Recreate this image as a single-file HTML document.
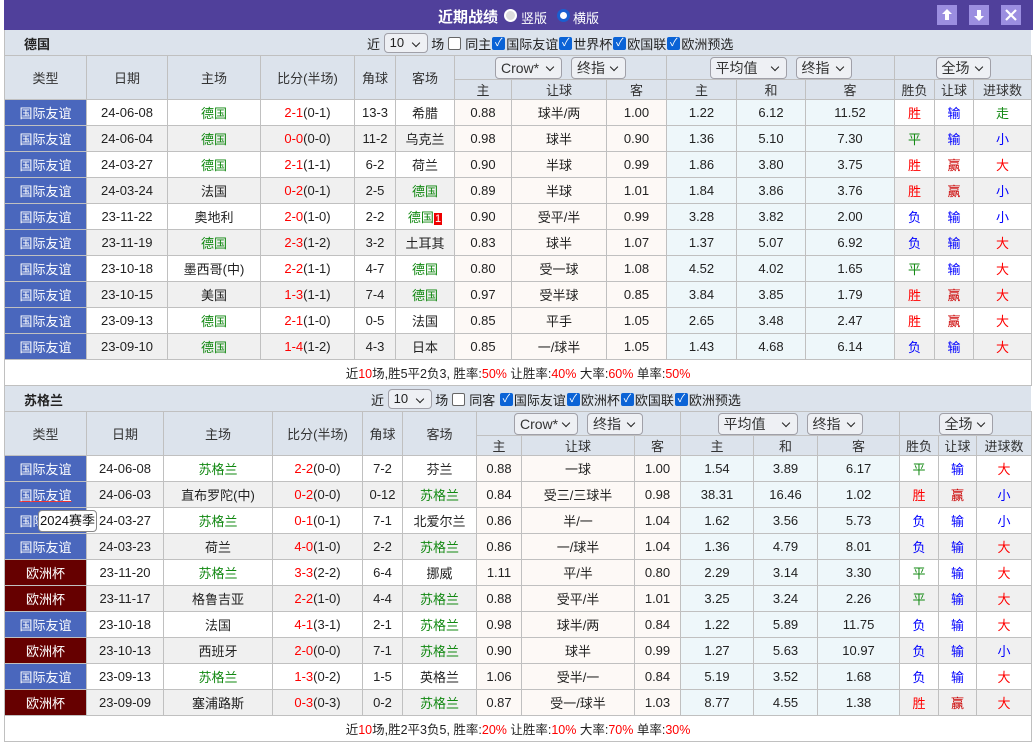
<!DOCTYPE html>
<html><head><meta charset="utf-8"><style>
*{box-sizing:border-box;margin:0;padding:0}
body{width:1033px;height:742px;background:#fff;font-family:"Liberation Sans","Noto Sans CJK SC",sans-serif;font-size:13px;color:#222;position:relative;overflow:hidden}
.top{position:absolute;left:4px;top:0;width:1029px;height:30px;background:#50409b;color:#fff}
.top .t{position:absolute;left:434px;top:6px;font-size:15px;font-weight:bold}
.top .r{position:absolute;top:9px;width:13px;height:13px;border-radius:50%;background:#fff}
.top .lab{position:absolute;top:8px;font-size:13px}
.btn{position:absolute;top:5px;width:20px;height:20px;background:#9b8ee0;color:#fff}
.sel{display:inline-block;border:1px solid #a0a0a8;border-radius:4px;background:#eef0f4;height:22px;line-height:20px;padding:0 5px;font-size:14px;position:relative;text-align:left;vertical-align:middle}
.sel:after{content:"";position:absolute;right:8px;top:6px;width:5px;height:5px;border-right:1.5px solid #222;border-bottom:1.5px solid #222;transform:rotate(45deg)}
.bar{position:absolute;left:4px;width:1027px;height:26px;background:#dce3ec;border-left:1px solid #c0c0c0}
.bar b{position:absolute;left:19px;top:4px;font-size:13px}
.ctl{position:absolute;top:3px;font-size:13px;white-space:nowrap;display:flex;align-items:center}
.ctl .sel{height:20px;line-height:18px;font-size:13px}
.cb{display:inline-block;width:13px;height:13px;border-radius:2px;background:#0b63d6;color:#fff;font-size:11px;line-height:13px;text-align:center;margin:0 1px}
.cbe{display:inline-block;width:13px;height:13px;border-radius:2px;border:1.5px solid #666;background:#fff;margin:0 4px}
table{position:absolute;left:4px;width:1027px;border-collapse:collapse;table-layout:fixed}
td{border:1px solid #c0c0c0;text-align:center;height:26px;padding:0;white-space:nowrap;overflow:visible}
thead td{background:#dce3ec;color:#333}
tr.h1 td{height:24px}tr.h2 td{height:20px}
tbody tr:nth-child(even) td{background:#f0f0f0}
tbody td.o{background:#fdf9f6!important}
tbody td.a{background:#eef7fa!important}
td.ty{background:#4a67bd!important;color:#fff}
td.eu{background:#600!important;color:#fff}
.g{color:#118811}.r{color:#f00}.b{color:#00f}.dr{color:#c00}
.sum td{height:26px;background:#fff!important;font-size:12.5px}
.one{background:#e00;color:#fff;font-size:11px;padding:0 1px}
.tip{position:absolute;left:38px;top:510px;width:59px;height:22px;border:1px solid #888;border-radius:4px;background:#fff;font-size:13px;line-height:20px;text-align:center;color:#111}
</style></head><body>
<div class="top"><span class="t">近期战绩</span>
<span class="r" style="left:500px;background:#ddd;border:2px solid #fff"></span><span class="lab" style="left:517px">竖版</span>
<span class="r" style="left:553px;border:3px solid #1a5fd0"></span><span class="lab" style="left:569px">横版</span>
<span class="btn" style="left:933px"><svg width="20" height="20"><path d="M10 4 L5 9 H8 V15 H12 V9 H15 Z" fill="#fff"/></svg></span>
<span class="btn" style="left:965px"><svg width="20" height="20"><path d="M10 16 L5 11 H8 V5 H12 V11 H15 Z" fill="#fff"/></svg></span>
<span class="btn" style="left:997px"><svg width="20" height="20"><path d="M5 5 L15 15 M15 5 L5 15" stroke="#fff" stroke-width="2.2"/></svg></span>
</div>

<div class="bar" style="top:30px"><b>德国</b>
<div class="ctl" style="left:362px">近&nbsp;<span class="sel" style="width:44px">10</span>&nbsp;场<span class="cbe"></span>同主<span class="cb">✓</span>国际友谊<span class="cb">✓</span>世界杯<span class="cb">✓</span>欧国联<span class="cb">✓</span>欧洲预选</div></div>

<table style="top:55px">
<colgroup><col style="width:82px"><col style="width:81px"><col style="width:93px"><col style="width:94px"><col style="width:41px"><col style="width:59px"><col style="width:57px"><col style="width:95px"><col style="width:60px"><col style="width:70px"><col style="width:69px"><col style="width:89px"><col style="width:40px"><col style="width:39px"><col style="width:58px"></colgroup>
<thead><tr class="h1"><td rowspan="2">类型</td><td rowspan="2">日期</td><td rowspan="2">主场</td><td rowspan="2">比分(半场)</td><td rowspan="2">角球</td><td rowspan="2">客场</td>
<td colspan="3"><span class="sel" style="width:67px">Crow*</span><span style="display:inline-block;width:9px"></span><span class="sel" style="width:55px">终指</span></td>
<td colspan="3"><span class="sel" style="width:77px">平均值</span><span style="display:inline-block;width:9px"></span><span class="sel" style="width:56px">终指</span></td>
<td colspan="3"><span class="sel" style="width:55px">全场</span></td></tr>
<tr class="h2"><td>主</td><td>让球</td><td>客</td><td>主</td><td>和</td><td>客</td><td>胜负</td><td>让球</td><td>进球数</td></tr></thead>
<tbody>
<tr><td class="ty">国际友谊</td><td>24-06-08</td><td class="g">德国</td><td><span class="r">2-1</span>(0-1)</td><td>13-3</td><td>希腊</td><td class="o">0.88</td><td class="o">球半/两</td><td class="o">1.00</td><td class="a">1.22</td><td class="a">6.12</td><td class="a">11.52</td><td class="r">胜</td><td class="b">输</td><td class="g">走</td></tr>
<tr><td class="ty">国际友谊</td><td>24-06-04</td><td class="g">德国</td><td><span class="r">0-0</span>(0-0)</td><td>11-2</td><td>乌克兰</td><td class="o">0.98</td><td class="o">球半</td><td class="o">0.90</td><td class="a">1.36</td><td class="a">5.10</td><td class="a">7.30</td><td class="g">平</td><td class="b">输</td><td class="b">小</td></tr>
<tr><td class="ty">国际友谊</td><td>24-03-27</td><td class="g">德国</td><td><span class="r">2-1</span>(1-1)</td><td>6-2</td><td>荷兰</td><td class="o">0.90</td><td class="o">半球</td><td class="o">0.99</td><td class="a">1.86</td><td class="a">3.80</td><td class="a">3.75</td><td class="r">胜</td><td class="dr">赢</td><td class="r">大</td></tr>
<tr><td class="ty">国际友谊</td><td>24-03-24</td><td>法国</td><td><span class="r">0-2</span>(0-1)</td><td>2-5</td><td class="g">德国</td><td class="o">0.89</td><td class="o">半球</td><td class="o">1.01</td><td class="a">1.84</td><td class="a">3.86</td><td class="a">3.76</td><td class="r">胜</td><td class="dr">赢</td><td class="b">小</td></tr>
<tr><td class="ty">国际友谊</td><td>23-11-22</td><td>奥地利</td><td><span class="r">2-0</span>(1-0)</td><td>2-2</td><td class="g">德国<span class="one">1</span></td><td class="o">0.90</td><td class="o">受平/半</td><td class="o">0.99</td><td class="a">3.28</td><td class="a">3.82</td><td class="a">2.00</td><td class="b">负</td><td class="b">输</td><td class="b">小</td></tr>
<tr><td class="ty">国际友谊</td><td>23-11-19</td><td class="g">德国</td><td><span class="r">2-3</span>(1-2)</td><td>3-2</td><td>土耳其</td><td class="o">0.83</td><td class="o">球半</td><td class="o">1.07</td><td class="a">1.37</td><td class="a">5.07</td><td class="a">6.92</td><td class="b">负</td><td class="b">输</td><td class="r">大</td></tr>
<tr><td class="ty">国际友谊</td><td>23-10-18</td><td>墨西哥(中)</td><td><span class="r">2-2</span>(1-1)</td><td>4-7</td><td class="g">德国</td><td class="o">0.80</td><td class="o">受一球</td><td class="o">1.08</td><td class="a">4.52</td><td class="a">4.02</td><td class="a">1.65</td><td class="g">平</td><td class="b">输</td><td class="r">大</td></tr>
<tr><td class="ty">国际友谊</td><td>23-10-15</td><td>美国</td><td><span class="r">1-3</span>(1-1)</td><td>7-4</td><td class="g">德国</td><td class="o">0.97</td><td class="o">受半球</td><td class="o">0.85</td><td class="a">3.84</td><td class="a">3.85</td><td class="a">1.79</td><td class="r">胜</td><td class="dr">赢</td><td class="r">大</td></tr>
<tr><td class="ty">国际友谊</td><td>23-09-13</td><td class="g">德国</td><td><span class="r">2-1</span>(1-0)</td><td>0-5</td><td>法国</td><td class="o">0.85</td><td class="o">平手</td><td class="o">1.05</td><td class="a">2.65</td><td class="a">3.48</td><td class="a">2.47</td><td class="r">胜</td><td class="dr">赢</td><td class="r">大</td></tr>
<tr><td class="ty">国际友谊</td><td>23-09-10</td><td class="g">德国</td><td><span class="r">1-4</span>(1-2)</td><td>4-3</td><td>日本</td><td class="o">0.85</td><td class="o">一/球半</td><td class="o">1.05</td><td class="a">1.43</td><td class="a">4.68</td><td class="a">6.14</td><td class="b">负</td><td class="b">输</td><td class="r">大</td></tr>
<tr class="sum"><td colspan="15">近<span class="r">10</span>场,胜5平2负3, 胜率:<span class="r">50%</span> 让胜率:<span class="r">40%</span> 大率:<span class="r">60%</span> 单率:<span class="r">50%</span></td></tr>
</tbody></table>

<div class="bar" style="top:386px"><b>苏格兰</b>
<div class="ctl" style="left:366px">近&nbsp;<span class="sel" style="width:44px">10</span>&nbsp;场<span class="cbe"></span>同客&nbsp;<span class="cb">✓</span>国际友谊<span class="cb">✓</span>欧洲杯<span class="cb">✓</span>欧国联<span class="cb">✓</span>欧洲预选</div></div>

<table style="top:411px">
<colgroup><col style="width:82px"><col style="width:77px"><col style="width:109px"><col style="width:90px"><col style="width:40px"><col style="width:74px"><col style="width:45px"><col style="width:113px"><col style="width:46px"><col style="width:73px"><col style="width:64px"><col style="width:82px"><col style="width:39px"><col style="width:38px"><col style="width:55px"></colgroup>
<thead><tr class="h1"><td rowspan="2">类型</td><td rowspan="2">日期</td><td rowspan="2">主场</td><td rowspan="2">比分(半场)</td><td rowspan="2">角球</td><td rowspan="2">客场</td>
<td colspan="3"><span class="sel" style="width:64px">Crow*</span><span style="display:inline-block;width:9px"></span><span class="sel" style="width:56px">终指</span></td>
<td colspan="3"><span class="sel" style="width:80px">平均值</span><span style="display:inline-block;width:9px"></span><span class="sel" style="width:56px">终指</span></td>
<td colspan="3"><span class="sel" style="width:54px">全场</span></td></tr>
<tr class="h2"><td>主</td><td>让球</td><td>客</td><td>主</td><td>和</td><td>客</td><td>胜负</td><td>让球</td><td>进球数</td></tr></thead>
<tbody>
<tr><td class="ty">国际友谊</td><td>24-06-08</td><td class="g">苏格兰</td><td><span class="r">2-2</span>(0-0)</td><td>7-2</td><td>芬兰</td><td class="o">0.88</td><td class="o">一球</td><td class="o">1.00</td><td class="a">1.54</td><td class="a">3.89</td><td class="a">6.17</td><td class="g">平</td><td class="b">输</td><td class="r">大</td></tr>
<tr><td class="ty"><span style="text-decoration:underline;text-decoration-color:#e33">国际友谊</span></td><td>24-06-03</td><td>直布罗陀(中)</td><td><span class="r">0-2</span>(0-0)</td><td>0-12</td><td class="g">苏格兰</td><td class="o">0.84</td><td class="o">受三/三球半</td><td class="o">0.98</td><td class="a">38.31</td><td class="a">16.46</td><td class="a">1.02</td><td class="r">胜</td><td class="dr">赢</td><td class="b">小</td></tr>
<tr><td class="ty">国际友谊</td><td>24-03-27</td><td class="g">苏格兰</td><td><span class="r">0-1</span>(0-1)</td><td>7-1</td><td>北爱尔兰</td><td class="o">0.86</td><td class="o">半/一</td><td class="o">1.04</td><td class="a">1.62</td><td class="a">3.56</td><td class="a">5.73</td><td class="b">负</td><td class="b">输</td><td class="b">小</td></tr>
<tr><td class="ty">国际友谊</td><td>24-03-23</td><td>荷兰</td><td><span class="r">4-0</span>(1-0)</td><td>2-2</td><td class="g">苏格兰</td><td class="o">0.86</td><td class="o">一/球半</td><td class="o">1.04</td><td class="a">1.36</td><td class="a">4.79</td><td class="a">8.01</td><td class="b">负</td><td class="b">输</td><td class="r">大</td></tr>
<tr><td class="eu">欧洲杯</td><td>23-11-20</td><td class="g">苏格兰</td><td><span class="r">3-3</span>(2-2)</td><td>6-4</td><td>挪威</td><td class="o">1.11</td><td class="o">平/半</td><td class="o">0.80</td><td class="a">2.29</td><td class="a">3.14</td><td class="a">3.30</td><td class="g">平</td><td class="b">输</td><td class="r">大</td></tr>
<tr><td class="eu">欧洲杯</td><td>23-11-17</td><td>格鲁吉亚</td><td><span class="r">2-2</span>(1-0)</td><td>4-4</td><td class="g">苏格兰</td><td class="o">0.88</td><td class="o">受平/半</td><td class="o">1.01</td><td class="a">3.25</td><td class="a">3.24</td><td class="a">2.26</td><td class="g">平</td><td class="b">输</td><td class="r">大</td></tr>
<tr><td class="ty">国际友谊</td><td>23-10-18</td><td>法国</td><td><span class="r">4-1</span>(3-1)</td><td>2-1</td><td class="g">苏格兰</td><td class="o">0.98</td><td class="o">球半/两</td><td class="o">0.84</td><td class="a">1.22</td><td class="a">5.89</td><td class="a">11.75</td><td class="b">负</td><td class="b">输</td><td class="r">大</td></tr>
<tr><td class="eu">欧洲杯</td><td>23-10-13</td><td>西班牙</td><td><span class="r">2-0</span>(0-0)</td><td>7-1</td><td class="g">苏格兰</td><td class="o">0.90</td><td class="o">球半</td><td class="o">0.99</td><td class="a">1.27</td><td class="a">5.63</td><td class="a">10.97</td><td class="b">负</td><td class="b">输</td><td class="b">小</td></tr>
<tr><td class="ty">国际友谊</td><td>23-09-13</td><td class="g">苏格兰</td><td><span class="r">1-3</span>(0-2)</td><td>1-5</td><td>英格兰</td><td class="o">1.06</td><td class="o">受半/一</td><td class="o">0.84</td><td class="a">5.19</td><td class="a">3.52</td><td class="a">1.68</td><td class="b">负</td><td class="b">输</td><td class="r">大</td></tr>
<tr><td class="eu">欧洲杯</td><td>23-09-09</td><td>塞浦路斯</td><td><span class="r">0-3</span>(0-3)</td><td>0-2</td><td class="g">苏格兰</td><td class="o">0.87</td><td class="o">受一/球半</td><td class="o">1.03</td><td class="a">8.77</td><td class="a">4.55</td><td class="a">1.38</td><td class="r">胜</td><td class="dr">赢</td><td class="r">大</td></tr>
<tr class="sum"><td colspan="15">近<span class="r">10</span>场,胜2平3负5, 胜率:<span class="r">20%</span> 让胜率:<span class="r">10%</span> 大率:<span class="r">70%</span> 单率:<span class="r">30%</span></td></tr>
</tbody></table>
<div class="tip">2024赛季</div>
</body></html>
